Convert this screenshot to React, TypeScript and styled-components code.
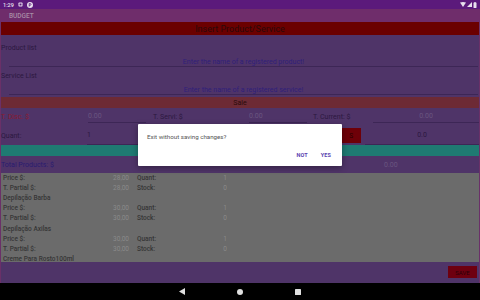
import React from 'react';
import styled, { createGlobalStyle } from 'styled-components';

const GlobalStyle = createGlobalStyle`
  html, body {
    margin: 0;
    padding: 0;
    background: #000;
  }
  * {
    box-sizing: border-box;
  }
`;

const Screen = styled.div`
  width: 480px;
  height: 300px;
  position: relative;
  overflow: hidden;
  display: flex;
  flex-direction: column;
  font-family: Roboto, 'Noto Sans', sans-serif;
  background: #4f3468;
`;

const StatusBar = styled.div`
  height: 9px;
  background: #5b1a7b;
  display: flex;
  align-items: center;
  justify-content: space-between;
  padding: 0 3px 0 3px;
  color: #e8e0ee;
  font-size: 5.5px;
  font-weight: 500;
  flex-shrink: 0;
`;

const StatusLeft = styled.div`
  display: flex;
  align-items: center;
  gap: 4px;
`;

const StatusRight = styled.div`
  display: flex;
  align-items: center;
  gap: 1px;
`;

const AppBar = styled.div`
  height: 13px;
  background: #6f2d6b;
  display: flex;
  align-items: center;
  padding-left: 9px;
  color: #a88ca6;
  font-size: 6.5px;
  font-weight: 500;
  flex-shrink: 0;
`;

const Body = styled.div`
  flex: 1;
  display: flex;
  flex-direction: column;
  border-left: 1px solid #6a3068;
  border-right: 1px solid #6a3068;
  min-height: 0;
`;

const Banner = styled.div<{ $bg: string; $h: number; $size: number }>`
  height: ${p => p.$h}px;
  background: ${p => p.$bg};
  display: flex;
  align-items: center;
  justify-content: center;
  color: #2a0a0a;
  font-size: ${p => p.$size}px;
  flex-shrink: 0;
`;

const FieldLabel = styled.div<{ $h: number }>`
  height: ${p => p.$h}px;
  display: flex;
  align-items: flex-end;
  font-size: 7px;
  color: #2c1840;
  padding-bottom: 1px;
  flex-shrink: 0;
`;

const InputLine = styled.div`
  height: 14px;
  margin: 0 1px 0 8px;
  border-bottom: 1px solid #3d2656;
  display: flex;
  align-items: center;
  justify-content: center;
  font-size: 7px;
  color: #30207a;
  padding-top: 5px;
  flex-shrink: 0;
`;

const Row = styled.div<{ $h: number; $pt?: number }>`
  height: ${p => p.$h}px;
  padding-top: ${p => p.$pt || 0}px;
  display: flex;
  align-items: center;
  font-size: 7px;
  color: #2c1840;
  flex-shrink: 0;
`;

const Cell = styled.div<{ $w: number; $color?: string; $line?: boolean; $center?: boolean; $faint?: boolean }>`
  width: ${p => p.$w}px;
  height: 100%;
  display: flex;
  align-items: center;
  justify-content: ${p => (p.$center ? 'center' : 'flex-start')};
  color: ${p => p.$color || (p.$faint ? '#6a5580' : '#2c1840')};
  border-bottom: ${p => (p.$line ? '1px solid #3d2656' : 'none')};
  flex-shrink: 0;
`;

const RedButton = styled.div`
  width: 40px;
  height: 15px;
  background: #6e0008;
  color: #2a0000;
  font-size: 6.5px;
  display: flex;
  align-items: center;
  justify-content: flex-end;
  padding-right: 8px;
  margin: 0 4px 0 0;
  flex-shrink: 0;
`;

const List = styled.div`
  height: 89px;
  background: #6b6b6b;
  overflow: hidden;
  flex-shrink: 0;
  padding-left: 2px;
`;

const ListRow = styled.div`
  height: 10.1px;
  display: flex;
  align-items: center;
  font-size: 6.5px;
  font-weight: 500;
  color: #363636;
`;

const ListLabel = styled.div<{ $w: number }>`
  width: ${p => p.$w}px;
`;

const ListValue = styled.div<{ $w: number }>`
  width: ${p => p.$w}px;
  text-align: right;
  color: #8a8a8a;
  font-weight: 400;
`;

const ItemName = styled.div`
  height: 10.1px;
  display: flex;
  align-items: center;
  font-size: 6.5px;
  font-weight: 500;
  color: #363636;
`;

const BottomBar = styled.div`
  flex: 1;
  background: #4f3468;
  display: flex;
  justify-content: flex-end;
  align-items: flex-start;
  padding: 4px 2px 0 0;
`;

const SaveButton = styled.div`
  width: 29px;
  height: 12px;
  background: #6e0010;
  color: #2a0008;
  font-size: 6px;
  display: flex;
  align-items: center;
  justify-content: center;
`;

const NavBar = styled.div`
  height: 17px;
  background: #000;
  display: flex;
  align-items: center;
  justify-content: center;
  gap: 52px;
  flex-shrink: 0;
`;

const Dialog = styled.div`
  position: absolute;
  left: 138px;
  top: 124px;
  width: 204px;
  height: 42px;
  background: #fff;
  border-radius: 1px;
  box-shadow: 0 2px 6px rgba(0, 0, 0, 0.35);
  display: flex;
  flex-direction: column;
  justify-content: space-between;
  padding: 9px 11px 8px 9px;
`;

const DialogText = styled.div`
  font-size: 6.2px;
  color: #555;
`;

const DialogActions = styled.div`
  display: flex;
  justify-content: flex-end;
  gap: 13px;
`;

const DialogButton = styled.div`
  font-size: 5.5px;
  font-weight: 700;
  color: #5a3fb0;
  letter-spacing: 0.1px;
`;

const items = [
  { name: null, price: '28,00', quant: '1', partial: '28,00', stock: '0' },
  { name: 'Depilação Barba', price: '30,00', quant: '1', partial: '30,00', stock: '0' },
  { name: 'Depilação Axilas', price: '30,00', quant: '1', partial: '30,00', stock: '0' },
];

export default function App() {
  return (
    <>
      <GlobalStyle />
      <Screen>
        <StatusBar>
          <StatusLeft>
            <span>1:29</span>
            <svg width="5" height="5" viewBox="0 0 5 5">
              <rect x="0.5" y="0.5" width="4" height="4" rx="0.8" fill="#e8e0ee" />
              <rect x="1.5" y="1.5" width="2" height="2" fill="#5b1a7b" />
            </svg>
            <svg width="6" height="6" viewBox="0 0 6 6">
              <circle cx="3" cy="3" r="3" fill="#e8e0ee" />
              <path d="M2.2 1.5 V4.6 M2.2 1.6 H3.4 A0.9 0.9 0 0 1 3.4 3.3 H2.2" stroke="#5b1a7b" strokeWidth="0.8" fill="none" />
            </svg>
          </StatusLeft>
          <StatusRight>
            <svg width="6" height="5" viewBox="0 0 6 5">
              <path d="M0 0.6 Q3 -0.6 6 0.6 L3 5 Z" fill="#e8e0ee" />
            </svg>
            <svg width="5" height="5" viewBox="0 0 5 5">
              <path d="M5 0 V5 H0 Z" fill="#e8e0ee" />
            </svg>
            <svg width="4" height="6" viewBox="0 0 4 6">
              <rect x="0.5" y="0.6" width="3" height="5.4" rx="0.4" fill="#e8e0ee" />
              <rect x="1.3" y="0" width="1.4" height="0.8" fill="#e8e0ee" />
            </svg>
          </StatusRight>
        </StatusBar>
        <AppBar>BUDGET</AppBar>
        <Body>
          <Banner $bg="#6b0000" $h={13} $size={9}>Insert Product/Service</Banner>
          <FieldLabel $h={18}>Product list</FieldLabel>
          <InputLine>Enter the name of a registered product!</InputLine>
          <FieldLabel $h={14}>Service List</FieldLabel>
          <InputLine>Enter the name of a registered service!</InputLine>
          <Row $h={2} />
          <Banner $bg="#6d2a35" $h={11} $size={7}>Sale</Banner>
          <Row $h={15} $pt={2}>
            <Cell $w={87} $color="#8a1a30">T. Disc. $</Cell>
            <Cell $w={58} $line $faint>0.00</Cell>
            <Cell $w={7} />
            <Cell $w={96}>T. Servi: $</Cell>
            <Cell $w={58} $line $faint>0.00</Cell>
            <Cell $w={6} />
            <Cell $w={60}>T. Current: $</Cell>
            <Cell $w={106} $line $faint $center>0.00</Cell>
          </Row>
          <Row $h={22} $pt={3}>
            <Cell $w={86}>Quant:</Cell>
            <Cell $w={234} $line>1</Cell>
            <RedButton>S</RedButton>
            <Cell $w={114} $line $center>0.0</Cell>
          </Row>
          <Banner $bg="#1f7a72" $h={11} $size={7} />
          <Row $h={17}>
            <Cell $w={383} $color="#2a1c70">Total Products: $</Cell>
            <Cell $w={90} $faint>0.00</Cell>
          </Row>
          <List>
            {items.map((it, i) => (
              <React.Fragment key={i}>
                {it.name && <ItemName>{it.name}</ItemName>}
                <ListRow>
                  <ListLabel $w={55}>Price $:</ListLabel>
                  <ListValue $w={71}>{it.price}</ListValue>
                  <ListLabel $w={8} />
                  <ListLabel $w={40}>Quant:</ListLabel>
                  <ListValue $w={50}>{it.quant}</ListValue>
                </ListRow>
                <ListRow>
                  <ListLabel $w={55}>T. Partial $:</ListLabel>
                  <ListValue $w={71}>{it.partial}</ListValue>
                  <ListLabel $w={8} />
                  <ListLabel $w={40}>Stock:</ListLabel>
                  <ListValue $w={50}>{it.stock}</ListValue>
                </ListRow>
              </React.Fragment>
            ))}
            <ItemName>Creme Para Rosto100ml</ItemName>
          </List>
          <BottomBar>
            <SaveButton>SAVE</SaveButton>
          </BottomBar>
        </Body>
        <NavBar>
          <svg width="6" height="7" viewBox="0 0 6 7">
            <path d="M6 0 V7 L0 3.5 Z" fill="#e0e0e0" />
          </svg>
          <svg width="6" height="6" viewBox="0 0 6 6">
            <circle cx="3" cy="3" r="3" fill="#e0e0e0" />
          </svg>
          <svg width="6" height="6" viewBox="0 0 6 6">
            <rect x="0" y="0" width="6" height="6" rx="0.6" fill="#e0e0e0" />
          </svg>
        </NavBar>
        <Dialog>
          <DialogText>Exit without saving changes?</DialogText>
          <DialogActions>
            <DialogButton>NOT</DialogButton>
            <DialogButton>YES</DialogButton>
          </DialogActions>
        </Dialog>
      </Screen>
    </>
  );
}
